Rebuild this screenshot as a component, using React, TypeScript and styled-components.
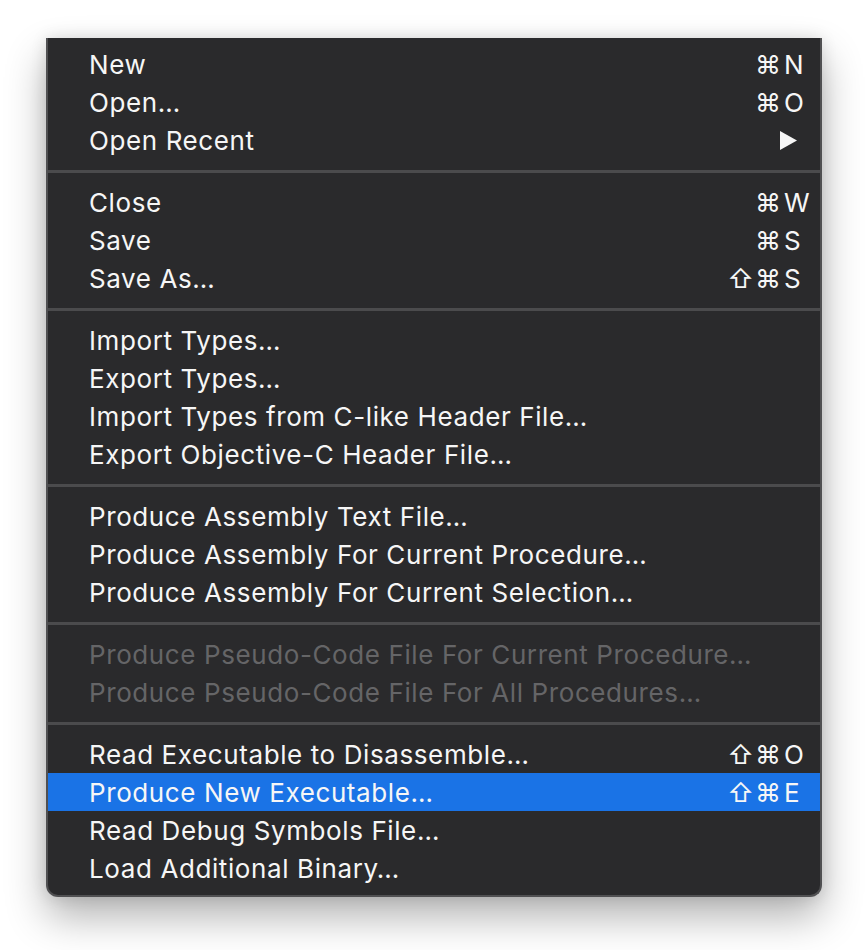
import styled, { createGlobalStyle } from "styled-components";

const GlobalStyle = createGlobalStyle`
  html, body {
    margin: 0;
    padding: 0;
    background: #ffffff;
    min-height: 950px;
  }
`;

type Item = {
  label?: string;
  mods?: string;
  keyChar?: string;
  submenu?: boolean;
  disabled?: boolean;
  active?: boolean;
  sep?: boolean;
};

const items: Item[] = [
  { label: "New", mods: "⌘", keyChar: "N" },
  { label: "Open…", mods: "⌘", keyChar: "O" },
  { label: "Open Recent", submenu: true },
  { sep: true },
  { label: "Close", mods: "⌘", keyChar: "W" },
  { label: "Save", mods: "⌘", keyChar: "S" },
  { label: "Save As…", mods: "⇧⌘", keyChar: "S" },
  { sep: true },
  { label: "Import Types…" },
  { label: "Export Types…" },
  { label: "Import Types from C-like Header File…" },
  { label: "Export Objective-C Header File…" },
  { sep: true },
  { label: "Produce Assembly Text File…" },
  { label: "Produce Assembly For Current Procedure…" },
  { label: "Produce Assembly For Current Selection…" },
  { sep: true },
  { label: "Produce Pseudo-Code File For Current Procedure…", disabled: true },
  { label: "Produce Pseudo-Code File For All Procedures…", disabled: true },
  { sep: true },
  { label: "Read Executable to Disassemble…", mods: "⇧⌘", keyChar: "O" },
  { label: "Produce New Executable…", mods: "⇧⌘", keyChar: "E", active: true },
  { label: "Read Debug Symbols File…" },
  { label: "Load Additional Binary…" },
];

const Page = styled.div`
  padding: 38px 0 0 46px;
`;

const Menu = styled.div`
  width: 772px;
  padding: 7px 0 8px;
  background: #2a2a2c;
  border: 2px solid #505052;
  border-top: none;
  border-radius: 0 0 12px 12px;
  box-shadow: 0 20px 40px rgba(0, 0, 0, 0.3), 0 0 16px rgba(0, 0, 0, 0.12);
  font-family: Inter, "Liberation Sans", sans-serif;
  font-size: 26px;
`;

const Row = styled.div<{ $active?: boolean; $disabled?: boolean }>`
  display: grid;
  grid-template-columns: 1fr auto 36px;
  align-items: center;
  height: 38px;
  padding-left: 41px;
  background: ${(p) => (p.$active ? "#1a73e6" : "transparent")};
  color: ${(p) => (p.$disabled ? "#656567" : "#f6f6f6")};
  white-space: nowrap;
`;

const Label = styled.span`
  letter-spacing: 0.6px;
`;

const Mods = styled.span`
  text-align: right;
  padding-right: 2px;
  letter-spacing: 1px;
`;

const Key = styled.span`
  text-align: left;
`;

const Arrow = styled.svg`
  grid-column: 2 / 4;
  justify-self: end;
  margin-right: 23px;
`;

const Separator = styled.div`
  height: 24px;
  display: flex;
  align-items: center;

  &::after {
    content: "";
    flex: 1;
    height: 3px;
    background: #4b4b4d;
  }
`;

export default function App() {
  return (
    <>
      <GlobalStyle />
      <Page>
        <Menu>
          {items.map((it, i) =>
            it.sep ? (
              <Separator key={i} />
            ) : (
              <Row key={i} $active={it.active} $disabled={it.disabled}>
                <Label>{it.label}</Label>
                {it.submenu ? (
                  <Arrow width="17" height="19" viewBox="0 0 17 19">
                    <path d="M0 0 L17 9.5 L0 19 Z" fill="#f6f6f6" />
                  </Arrow>
                ) : (
                  <>
                    <Mods>{it.mods}</Mods>
                    <Key>{it.keyChar}</Key>
                  </>
                )}
              </Row>
            )
          )}
        </Menu>
      </Page>
    </>
  );
}
